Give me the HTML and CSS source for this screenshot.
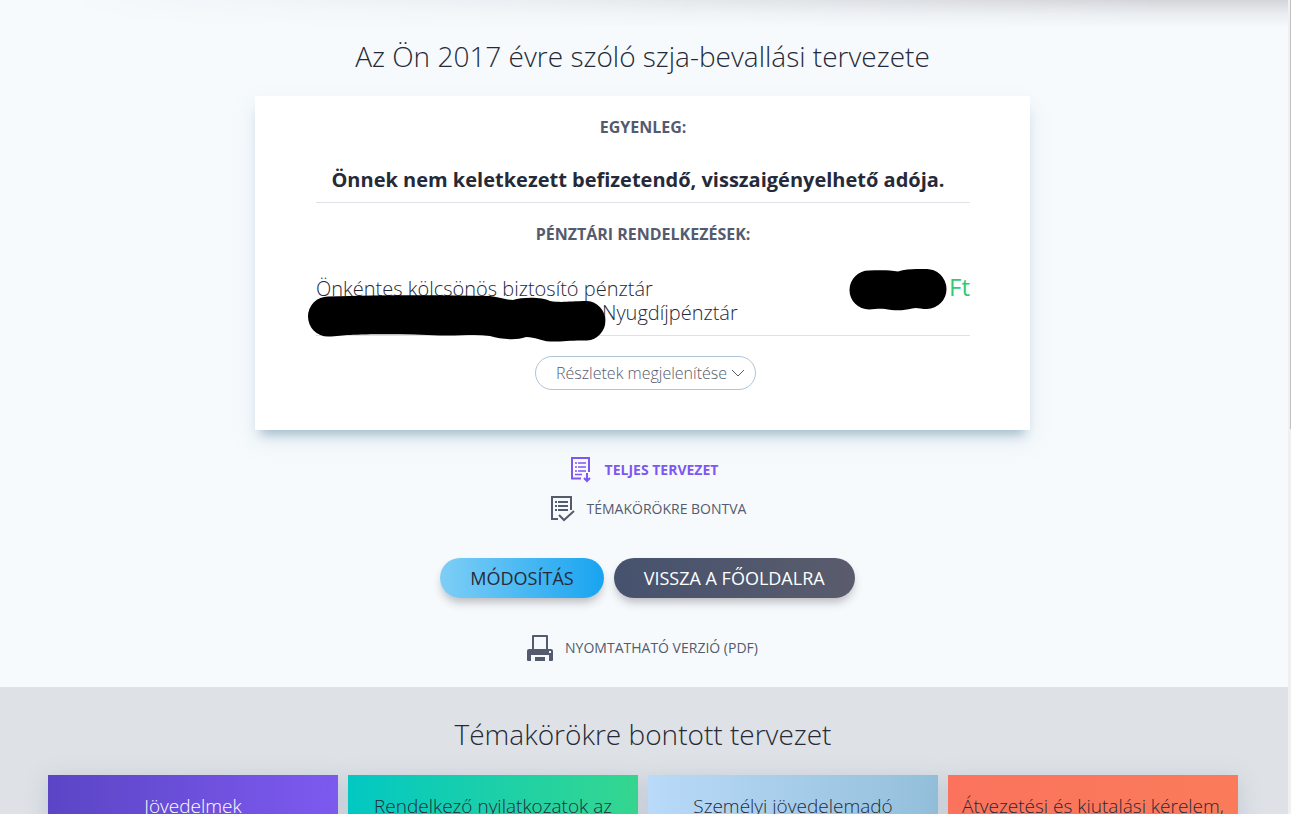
FILE: index.html
```
<!DOCTYPE html>
<html lang="hu">
<head>
    <meta charset="UTF-8">
    <meta name="viewport" content="width=device-width, initial-scale=1.0">
    <title>Szja-bevallási tervezet</title>
    <link rel="stylesheet" href="styles.css">
</head>
<body>
    <main class="page">
        <section class="summary">
            <h1>Az Ön 2017 évre szóló szja-bevallási tervezete</h1>

            <div class="card">
                <h2>Egyenleg:</h2>
                <p class="result">Önnek nem keletkezett befizetendő, visszaigényelhető adója.</p>
                <h2>Pénztári rendelkezések:</h2>
                <div class="fund">
                    <div class="fund-name">
                        Önkéntes kölcsönös biztosító pénztár<br>
                        <span class="hidden-name"><svg width="300" height="48" viewBox="308 294 300 48"><path d="M328 296.500C380 295 440 295 490 296C500 297 505 300 513 300C523 297 542 297 550 301C562 303 570 301 587 301A19.800 19.800 0 0 1 587 340.500C570 340 562 342 550 341.500C540 341 536 337 526 337C515 341 501 339 490 336C475 334 460 336 440 335.500C410 334 370 334 350 335C343 335 337 336.500 328 336.500A20 20 0 0 1 328 296.500Z"/></svg></span>Nyugdíjpénztár
                    </div>
                    <div class="amount">
                        <svg width="98" height="42" viewBox="849 269 98 42"><path d="M869 270.500C880 270 890 270 898 271.500C908 268.500 918 269 926 269A20 20 0 0 1 927 309C920 309 917 307 912 308.500C903 311 893 310.500 885 309C880 308.500 875 309 869 309.500A19.500 19.500 0 0 1 869 270.500Z"/></svg>
                        <span>Ft</span>
                    </div>
                </div>
                <button type="button" class="details">
                    Részletek megjelenítése
                    <svg width="14" height="8" viewBox="0 0 14 8"><path d="M1 1l6 6 6-6" fill="none" stroke="currentColor"/></svg>
                </button>
            </div>

            <div class="links">
                <a href="#" class="active">
                    <svg width="24" height="26" viewBox="0 0 24 26" fill="none" stroke="currentColor" stroke-width="2"><path d="M12 21.500H3V1H20V15"/><path d="M6 6h2m1 0h8M6 10h2m1 0h8M6 14h2m1 0h8M6 17.500h7" stroke-width="1.500"/><path d="M18 16v8M15 21l3 3 3-3"/></svg>
                    Teljes tervezet
                </a>
                <a href="#" class="by-topic">
                    <svg width="26" height="26" viewBox="0 0 26 26" fill="none" stroke="currentColor" stroke-width="2"><path d="M9 23H3V1H22V14"/><path d="M6 6h2m1 0h10M6 10h2m1 0h10M6 14h2m1 0h10"/><path d="M10 19l5 5L25 15"/></svg>
                    Témakörökre bontva
                </a>
            </div>

            <div class="buttons">
                <button type="button" class="modify">Módosítás</button>
                <button type="button" class="back">Vissza a főoldalra</button>
            </div>

            <div class="links">
                <a href="#">
                    <svg width="26" height="26" viewBox="0 0 26 26" fill="currentColor"><path d="M5 14V1q0-1 1-1H20q1 0 1 1V14h3q2 0 2 2v9q0 1-1 1H22V20H4v6H1q-1 0-1-1V16q0-2 2-2ZM7 2V14H19V2ZM22 16v2h2v-2Z" fill-rule="evenodd"/><path d="M8 22H18v4H8Z"/></svg>
                    Nyomtatható verzió (PDF)
                </a>
            </div>
        </section>

        <section class="topics">
            <h1>Témakörökre bontott tervezet</h1>
            <div class="tiles">
                <div class="tile purple">Jövedelmek</div>
                <div class="tile green">Rendelkező nyilatkozatok az</div>
                <div class="tile blue">Személyi jövedelemadó</div>
                <div class="tile orange">Átvezetési és kiutalási kérelem,</div>
            </div>
        </section>
    </main>
    <div class="scrollbar"><div class="thumb"></div></div>
</body>
</html>
```

FILE: styles.css
```
* {
    box-sizing: border-box;
}
body {
    display: flex;
    height: 100vh;
    margin: 0;
    overflow: hidden;
    font-family: "Open Sans", sans-serif;
    font-weight: 300;
    color: #262a38;
    background-color: #f6fafd;
}
.page {
    position: relative;
    flex: 1;
    overflow: hidden;
}
/* shadow of the header, stronger to the right */
.page::before {
    content: "";
    position: absolute;
    top: 0;
    left: 0;
    right: 0;
    height: 28px;
    background: linear-gradient(to bottom, rgba(40, 35, 45, 0.17), rgba(40, 35, 45, 0.06) 50%, transparent);
    -webkit-mask-image: linear-gradient(to right, transparent 5%, rgba(0, 0, 0, 0.3) 40%, #000 90%);
    mask-image: linear-gradient(to right, transparent 5%, rgba(0, 0, 0, 0.3) 40%, #000 90%);
}
.summary {
    display: flex;
    flex-direction: column;
    align-items: center;
    padding: 36px 3px 26px 0;
}
h1 {
    margin: 0;
    font-size: 28px;
    line-height: 40px;
    font-weight: 300;
    text-align: center;
}
.card {
    width: 100%;
    max-width: 775px;
    margin-top: 20px;
    padding: 20px 60px 40px 61px;
    text-align: center;
    background-color: #fff;
    box-shadow: 0 10px 10px -6px #a3bccb, 0 10px 20px rgba(163, 188, 203, 0.25);
}
h2 {
    margin: 0;
    font-size: 16px;
    line-height: 22px;
    font-weight: 700;
    text-transform: uppercase;
    color: #555b6e;
}
.result {
    margin: 26px 0 20px;
    padding: 0 10px 6px 0;
    border-bottom: 1px solid #dee2e6;
    font-size: 20px;
    line-height: 32px;
    font-weight: 700;
}
.fund {
    display: flex;
    justify-content: space-between;
    margin: 32px 0 20px;
    padding-bottom: 10px;
    border-bottom: 1px solid #dee2e6;
    font-size: 20px;
    line-height: 24px;
    text-align: left;
}
.hidden-name {
    position: relative;
    display: inline-block;
    width: 286px;
}
.hidden-name svg {
    position: absolute;
    left: -8px;
    bottom: -22px;
}
.amount {
    display: flex;
    align-items: flex-start;
    gap: 2px;
    height: 40px;
    margin-top: -8px;
    font-size: 24px;
    line-height: 36px;
    font-weight: 400;
    color: #2ecc71;
}
.amount svg {
    fill: #000;
}
button {
    font-family: inherit;
    cursor: pointer;
}
.details {
    display: inline-flex;
    align-items: center;
    gap: 4px;
    height: 34px;
    padding: 0 10px 0 20px;
    margin-left: 5px;
    border: 1px solid #b0c4d8;
    border-radius: 17px;
    font-size: 16px;
    font-weight: 300;
    color: #555b6e;
    background-color: #fff;
    vertical-align: top;
}
.links {
    display: flex;
    flex-direction: column;
    align-items: center;
    gap: 13px;
    margin-top: 27px;
}
.links a {
    display: flex;
    align-items: center;
    gap: 12px;
    height: 26px;
    font-size: 14px;
    line-height: 18px;
    font-weight: 400;
    text-transform: uppercase;
    text-decoration: none;
    color: #555b6e;
}
.links .active {
    padding-left: 2px;
    font-weight: 700;
    color: #7e57f0;
}
.links .by-topic {
    padding-left: 10px;
}
.buttons {
    display: flex;
    gap: 10px;
    margin: 36px 0 10px 10px;
}
.buttons button {
    height: 40px;
    padding: 0 30px;
    border: none;
    border-radius: 20px;
    font-size: 18px;
    text-transform: uppercase;
    box-shadow: 0 6px 10px -2px rgba(40, 30, 40, 0.3);
}
.modify {
    color: #262a38;
    background: linear-gradient(to right, #7ecef6, #18a4f0);
}
.back {
    color: #fff;
    background: linear-gradient(to right, #46526e, #5a5c6c);
}
.topics {
    padding: 27px 50px 0 48px;
    background-color: #dee2e6;
}
.tiles {
    display: grid;
    grid-template-columns: repeat(4, 1fr);
    gap: 10px;
    margin-top: 21px;
}
.tile {
    height: 120px;
    padding: 18px 10px;
    font-size: 19px;
    line-height: 26px;
    text-align: center;
    box-shadow: 0 4px 20px rgba(120, 140, 170, 0.3);
}
.purple {
    color: #fff;
    background: linear-gradient(to right, #5b45c5, #7d5af0);
}
.green {
    background: linear-gradient(to right, #02c8c3, #35d78f);
}
.blue {
    background: linear-gradient(to right, #b9daf9, #93bfda);
}
.orange {
    background: linear-gradient(to right, #fb735d, #fa7b5a);
}
.scrollbar {
    width: 3px;
    padding-left: 2px;
    background-color: #f0f0f0;
}
.thumb {
    height: 429px;
    background-color: #c1c1c1;
}
```
